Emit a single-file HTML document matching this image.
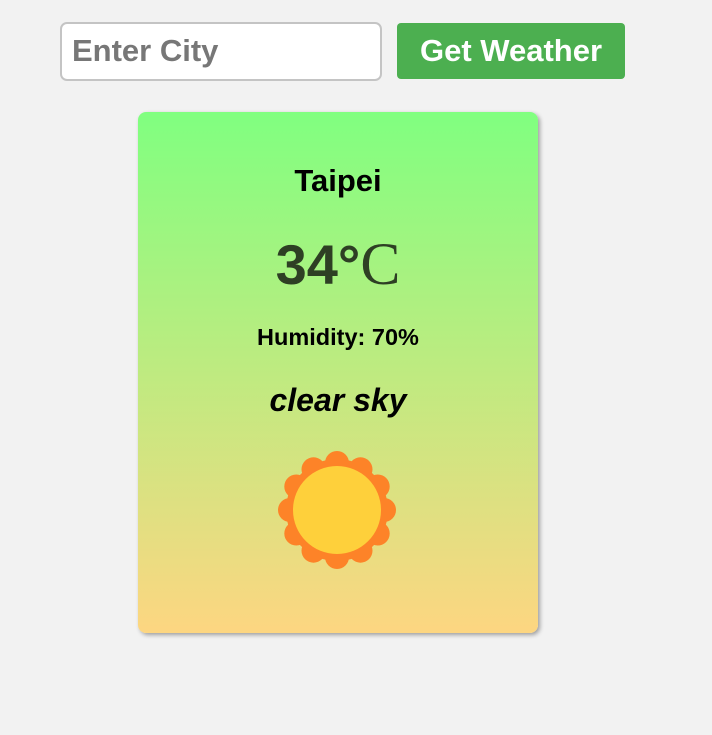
<!DOCTYPE html>
<html><head><meta charset="utf-8"><style>
html,body{margin:0;padding:0;}
body{width:712px;height:735px;background:#f2f2f2;position:relative;overflow:hidden;font-family:"Liberation Sans",Arial,sans-serif;}
.inp{position:absolute;left:60px;top:22px;width:318px;height:55px;border:2px solid #c4c4c4;border-radius:7px;background:#fff;box-sizing:content-box;}
.inp span{position:absolute;left:10px;top:9px;font-size:31px;font-weight:bold;color:#777;}
.btn{position:absolute;left:397px;top:23px;width:228px;height:56px;background:#4caf50;border-radius:4px;color:#fff;font-size:31px;font-weight:bold;text-align:center;line-height:56px;}
.card{position:absolute;left:138px;top:112px;width:400px;height:521px;border-radius:8px;background:linear-gradient(#80ff80,#fdd681);box-shadow:2px 2px 4px rgba(0,0,0,0.35);}
.t{position:absolute;left:0;width:400px;text-align:center;font-weight:bold;}
</style></head><body>
<div class="inp"><span>Enter City</span></div>
<div class="btn">Get Weather</div>
<div class="card">
<div class="t" style="top:51px;font-size:31px;color:#000;">Taipei</div>
<div class="t" style="top:118px;font-size:56px;color:#2e3f24;">34°<span style="font-family:'Liberation Serif',serif;font-weight:normal;font-size:60px;">C</span></div>
<div class="t" style="top:212px;font-size:23.5px;color:#000;">Humidity: 70%</div>
<div class="t" style="top:270px;font-size:32px;font-style:italic;color:#000;">clear sky</div>
<svg style="position:absolute;left:0;top:0" width="400" height="521">
<g transform="translate(199,398)" fill="#fd8328">
<circle r="51"/>
<g id="b"><circle cx="0" cy="-47" r="12"/><circle cx="23.5" cy="-40.7" r="12"/><circle cx="40.7" cy="-23.5" r="12"/></g>
<use href="#b" transform="rotate(90)"/><use href="#b" transform="rotate(180)"/><use href="#b" transform="rotate(270)"/>
<circle r="44" fill="#fed03b"/>
</g></svg>
</div>
</body></html>
